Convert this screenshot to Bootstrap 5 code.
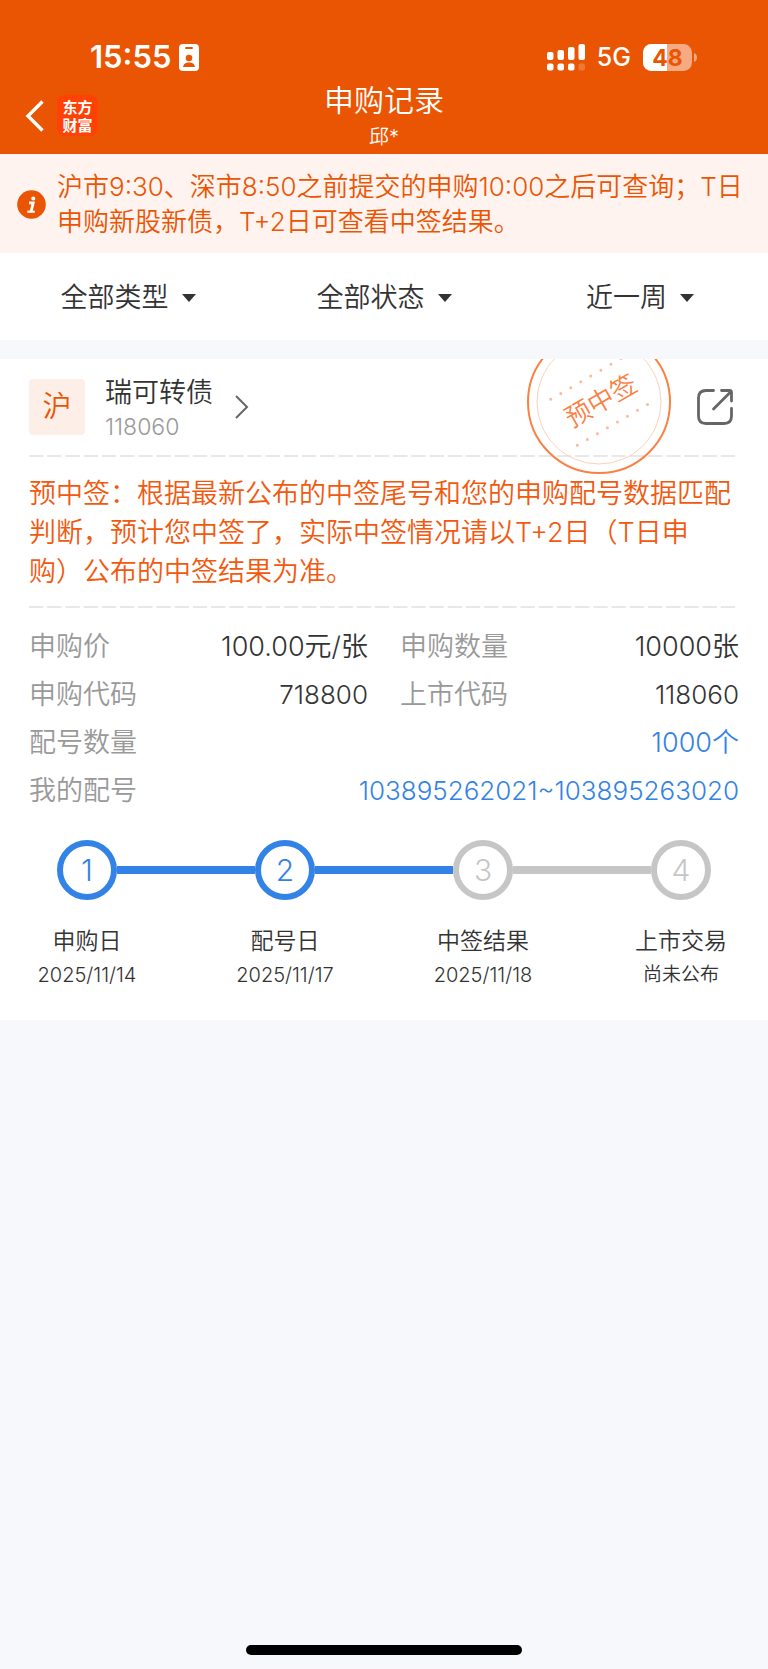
<!DOCTYPE html>
<html lang="zh-CN">
<head>
<meta charset="utf-8">
<meta name="viewport" content="width=device-width, initial-scale=1">
<title>申购记录</title>
<link href="https://cdn.jsdelivr.net/npm/bootstrap@5.3.0/dist/css/bootstrap.min.css" rel="stylesheet">
<style>
  :root { --brand: #ea5504; --accent: #3382e6; --idle: #c6c6c6; --ink: #333; --muted: #999; }
  body { font-family: Inter, "Noto Sans CJK SC", sans-serif; font-weight: 350; font-size: 27px; color: var(--ink); background: #f6f8fb; }
  svg { display: block; flex: none; }
  .app-header { background: var(--brand); color: #fff; }
  .status-bar { height: 76px; padding: 38px 70px 0 90px; }
  .clock { font-size: 31px; line-height: 38px; font-weight: 600; }
  .network { font-size: 25px; line-height: 38px; font-weight: 500; }
  .title-bar { display: grid; grid-template-columns: 1fr auto 1fr; height: 78px; padding: 1px 24px 0; }
  .title-bar h1 { font-size: 30px; line-height: 46px; font-weight: 350; }
  .title-bar p { font-size: 20px; line-height: 28px; }
  .app-logo { width: 41px; height: 41px; margin-left: 12px; border-radius: 8px; background: #ff4106; font-family: "Noto Sans CJK SC", sans-serif; font-size: 15px; line-height: 18px; font-weight: 700; }
  .notice { background: #fff3ef; color: var(--brand); padding: 15px 24px 14px 17px; font-size: 26px; line-height: 35px; gap: 11px; }
  .filters { height: 87px; padding-top: 3px; }
  .filter-select { appearance: none; border: 0; color: var(--ink); font-size: 27px; font-weight: 350; line-height: 40px; padding: 0 27px 0 0;
    background: url("data:image/svg+xml,%3Csvg xmlns='http://www.w3.org/2000/svg' viewBox='0 0 14 8'%3E%3Cpath d='M0 0h14L7 8z' fill='%23333'/%3E%3C/svg%3E") right center / 14px 8px no-repeat; }
  .record { margin-top: 19px; padding: 0 29px 28px; }
  .record-head { height: 96px; }
  .market { width: 56px; height: 56px; border-radius: 4px; background: #fdeee7; color: var(--brand); font-size: 29px; }
  .bond { color: var(--ink); margin-left: 20px; gap: 22px; }
  .bond-name { font-size: 27px; line-height: 38px; padding-top: 2px; }
  .bond-code { font-size: 23px; line-height: 30px; color: var(--muted); }
  .share { margin-right: 6px; }
  .stamp { right: 97px; top: -29px; pointer-events: none; }
  .stamp text { font-size: 26px; font-family: "Noto Sans CJK SC", sans-serif; }
  .dashes { height: 2px; background: linear-gradient(90deg, #e8e8e8 77%, transparent 0) 0 0 / 18px 2px round; }
  .verdict { color: #f2590f; line-height: 39px; padding: 17px 0 15px; }
  .facts { display: grid; grid-template-columns: 1fr 1fr; column-gap: 32px; padding-top: 15px; line-height: 48px; }
  .facts dt { font-weight: 350; color: var(--muted); }
  .facts a { color: var(--accent); }
  .facts .digits { font-size: 26px; }
  .fact-wide { grid-column: 1 / -1; }
  .track { padding: 25px 28px 0; }
  .dot { width: 60px; height: 60px; border: 6px solid var(--idle); border-radius: 50%; color: var(--idle); font-size: 30px; font-weight: 300; }
  .link-line { height: 8px; background: var(--idle); }
  .dot.done { border-color: var(--accent); color: var(--accent); }
  .link-line.done { background: var(--accent); }
  .captions { padding-top: 24px; }
  .captions > div { width: 116px; }
  .step-name { font-size: 23px; line-height: 34px; }
  .step-date { font-size: 20px; line-height: 34px; }
  .step-pending { font-size: 19px; line-height: 34px; }
  .home-bar { width: 36%; height: 10px; border-radius: 5px; background: #000; margin: auto auto 14px; }
</style>
</head>
<body>
<div class="d-flex flex-column min-vh-100">
  <header class="app-header">
    <div class="status-bar d-flex align-items-center">
      <span class="clock">15:55</span>
      <svg class="ms-2" width="20" height="27" viewBox="0 0 20 27"><rect width="20" height="27" rx="4" fill="#fff"/><g fill="#ea5504"><rect x="6" y="3" width="8" height="2" rx="1"/><circle cx="10" cy="14" r="3.3"/><path d="M4 23c.5-3.500 3-4.600 6-4.600s5.500 1.100 6 4.600z"/></g></svg>
      <svg class="ms-auto" width="38" height="27" viewBox="0 0 38 27" fill="#fff"><rect y="8" width="6.500" height="8" rx="2"/><rect x="10.500" y="6" width="6.500" height="10" rx="2"/><rect x="21" y="3" width="6.500" height="13" rx="2"/><rect x="31.500" width="6.500" height="16" rx="2"/><rect y="19.500" width="6.500" height="7" rx="2"/><rect x="10.500" y="19.500" width="6.500" height="7" rx="2"/><rect x="21" y="19.500" width="6.500" height="7" rx="2"/><rect x="31.500" y="19.500" width="6.500" height="7" rx="2" opacity=".2"/></svg>
      <span class="network ms-2 ps-1 pe-2 me-1">5G</span>
      <svg width="55" height="27" viewBox="0 0 55 27"><defs><clipPath id="shell"><rect width="49" height="27" rx="8.500"/></clipPath></defs><g clip-path="url(#shell)"><rect width="49" height="27" fill="#f5aa82"/><rect width="24" height="27" fill="#fff"/></g><path d="M51 9c4 1 4 8 0 9z" fill="#f5aa82"/><text x="24.500" y="22" text-anchor="middle" font-size="23" font-weight="700" fill="#ea5504">48</text></svg>
    </div>
    <div class="title-bar">
      <div class="d-flex align-items-center">
        <a href="#" aria-label="返回"><svg width="21" height="32" viewBox="0 0 21 32" fill="none" stroke="#fff" stroke-width="3.400"><path d="M18.500 1.500 4 16l14.500 14.500"/></svg></a>
        <div class="app-logo d-flex align-items-center justify-content-center">东方<br>财富</div>
      </div>
      <div class="text-center"><h1 class="m-0">申购记录</h1><p class="m-0">邱*</p></div>
    </div>
  </header>

  <div class="notice d-flex align-items-center" role="note">
    <svg width="29" height="29" viewBox="0 0 29 29"><circle cx="14.500" cy="14.500" r="14.300" fill="#ea5504"/><g fill="none" stroke="#fff"><path d="M12 12.800h4.200l-2 8.400" stroke-width="2.800"/><path d="M10.300 21.700h7.400" stroke-width="2.200"/></g><circle cx="16.300" cy="8.500" r="2" fill="#fff"/></svg>
    <p class="m-0">沪市9:30、深市8:50之前提交的申购10:00之后可查询；T日申购新股新债，T+2日可查看中签结果。</p>
  </div>

  <form class="filters row g-0 align-items-center text-center bg-white">
    <div class="col"><select class="filter-select" aria-label="类型"><option>全部类型</option></select></div>
    <div class="col"><select class="filter-select" aria-label="状态"><option>全部状态</option></select></div>
    <div class="col"><select class="filter-select" aria-label="时间"><option>近一周</option></select></div>
  </form>

  <main class="record bg-white position-relative overflow-hidden">
    <div class="record-head d-flex align-items-center">
      <span class="market d-flex align-items-center justify-content-center">沪</span>
      <a href="#" class="bond d-flex align-items-center text-decoration-none">
        <span><span class="bond-name d-block">瑞可转债</span><span class="bond-code d-block">118060</span></span>
        <svg width="14" height="24" viewBox="0 0 14 24" fill="none" stroke="#666" stroke-width="2"><path d="m1 1 11 11L1 23"/></svg>
      </a>
      <button type="button" class="share btn p-0 border-0 ms-auto" aria-label="分享">
        <svg width="36" height="36" viewBox="0 0 36 36" fill="none" stroke="#666" stroke-width="2.800" stroke-linecap="round" stroke-linejoin="round"><path d="M16.500 1.500H9Q1.500 1.500 1.500 9v18Q1.500 34.500 9 34.500h18Q34.500 34.500 34.500 27v-7.500M24.500 1.500h8q2 0 2 2V12M33.500 3 16.500 20"/></svg>
      </button>
    </div>
    <svg class="stamp position-absolute" width="144" height="144" viewBox="0 0 144 144" fill="none">
      <circle cx="72" cy="72" r="71" stroke="#fa8044" stroke-width="2"/>
      <circle cx="72" cy="72" r="62" stroke="#fdd0b8"/>
      <g stroke="#fcba98" stroke-width="3" stroke-linecap="round" stroke-dasharray="0 11.600"><path d="m23.700 69.300 71-41.200M50.300 115.300l71-41.200"/></g>
      <text transform="rotate(-30 74 71)" x="74" y="80" text-anchor="middle" fill="#fa8044">预中签</text>
    </svg>
    <div class="dashes"></div>
    <p class="verdict m-0">预中签：根据最新公布的中签尾号和您的申购配号数据匹配判断，预计您中签了，实际中签情况请以T+2日（T日申<br>购）公布的中签结果为准。</p>
    <div class="dashes"></div>

    <dl class="facts m-0">
      <div class="d-flex justify-content-between"><dt>申购价</dt><dd class="m-0">100.00元/张</dd></div>
      <div class="d-flex justify-content-between"><dt>申购数量</dt><dd class="m-0">10000张</dd></div>
      <div class="d-flex justify-content-between"><dt>申购代码</dt><dd class="digits m-0">718800</dd></div>
      <div class="d-flex justify-content-between"><dt>上市代码</dt><dd class="digits m-0">118060</dd></div>
      <div class="fact-wide d-flex justify-content-between"><dt>配号数量</dt><dd class="m-0"><a href="#" class="text-decoration-none">1000个</a></dd></div>
      <div class="fact-wide d-flex justify-content-between"><dt>我的配号</dt><dd class="digits m-0"><a href="#" class="text-decoration-none">103895262021~103895263020</a></dd></div>
    </dl>

    <div class="track d-flex align-items-center">
      <span class="dot done d-flex align-items-center justify-content-center">1</span>
      <span class="link-line done flex-fill"></span>
      <span class="dot done d-flex align-items-center justify-content-center">2</span>
      <span class="link-line done flex-fill"></span>
      <span class="dot d-flex align-items-center justify-content-center">3</span>
      <span class="link-line flex-fill"></span>
      <span class="dot d-flex align-items-center justify-content-center">4</span>
    </div>
    <div class="captions d-flex justify-content-between text-center">
      <div><div class="step-name">申购日</div><div class="step-date">2025/11/14</div></div>
      <div><div class="step-name">配号日</div><div class="step-date">2025/11/17</div></div>
      <div><div class="step-name">中签结果</div><div class="step-date">2025/11/18</div></div>
      <div><div class="step-name">上市交易</div><div class="step-pending">尚未公布</div></div>
    </div>
  </main>
  <div class="home-bar"></div>
</div>
<script src="https://cdn.jsdelivr.net/npm/bootstrap@5.3.0/dist/js/bootstrap.bundle.min.js"></script>
</body>
</html>
